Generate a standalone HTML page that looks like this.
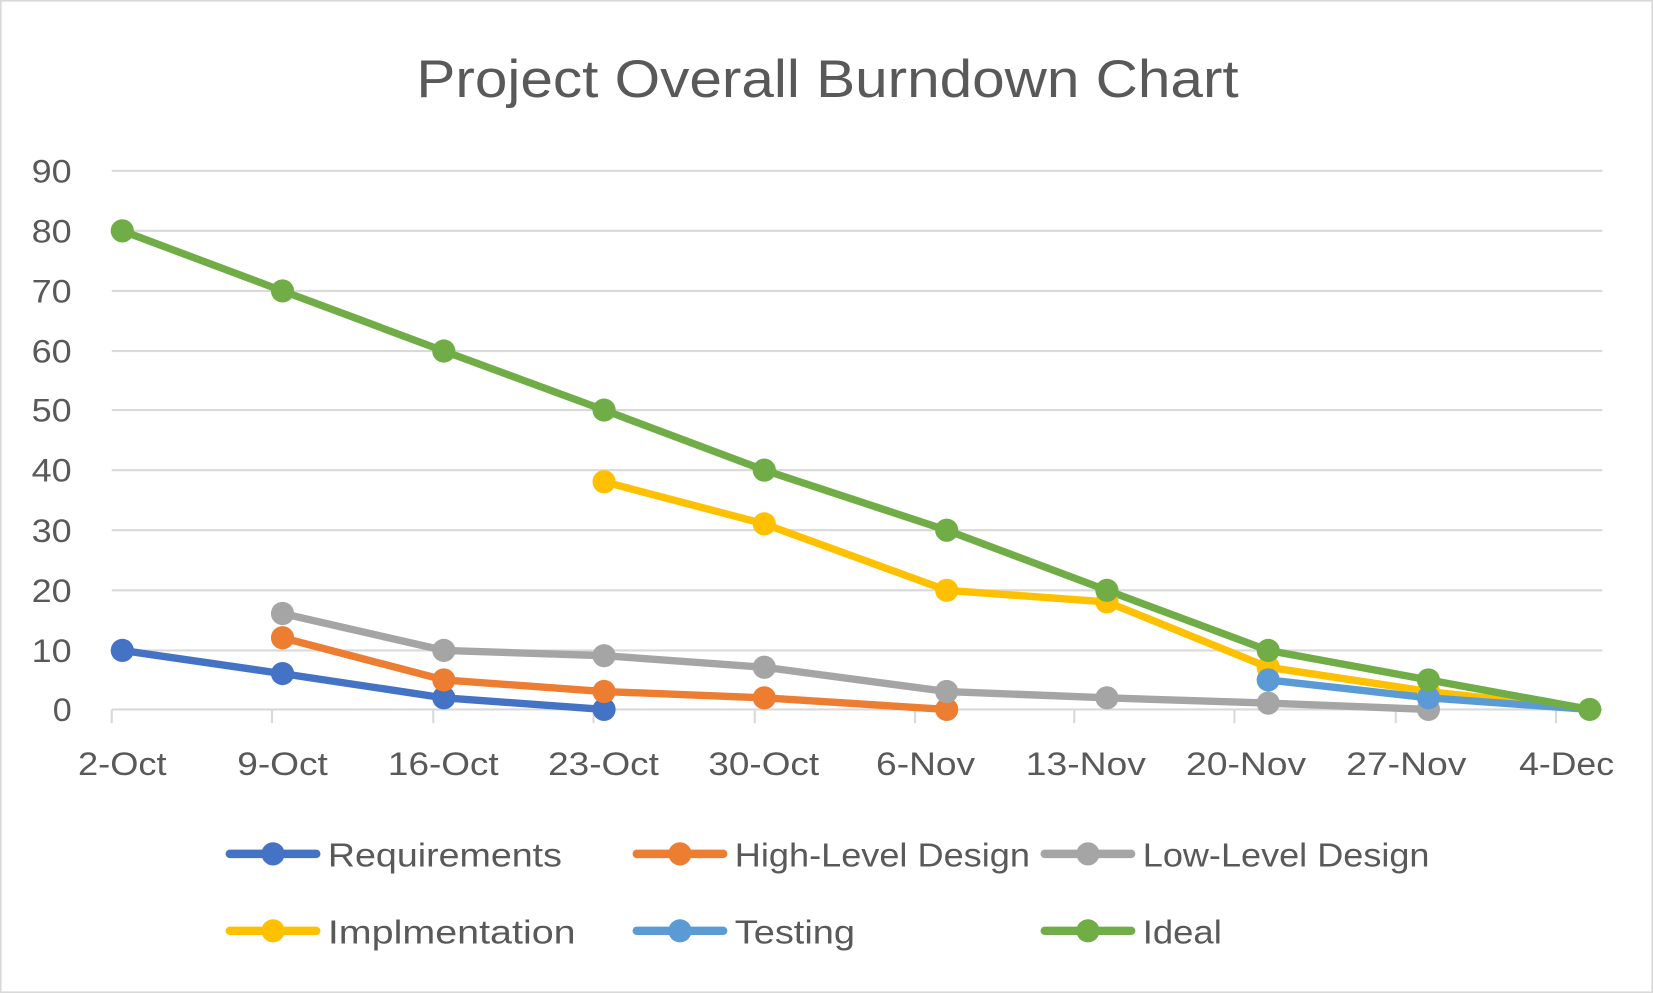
<!DOCTYPE html>
<html><head><meta charset="utf-8"><style>
html,body{margin:0;padding:0;background:#fff;}
svg{display:block;}
text{font-family:"Liberation Sans",sans-serif;fill:#595959;}
</style></head><body>
<svg width="1653" height="993" viewBox="0 0 1568 942" preserveAspectRatio="none">
<rect x="0.5" y="0.5" width="1567" height="941" fill="#fff" stroke="#d9d9d9" stroke-width="2"/>
<text x="785" y="92" font-size="50" text-anchor="middle" textLength="780" lengthAdjust="spacingAndGlyphs">Project Overall Burndown Chart</text>
<g stroke="#d9d9d9" stroke-width="2">
<line x1="106" x2="1520" y1="162" y2="162"/><line x1="106" x2="1520" y1="219" y2="219"/>
<line x1="106" x2="1520" y1="276" y2="276"/><line x1="106" x2="1520" y1="333" y2="333"/>
<line x1="106" x2="1520" y1="389" y2="389"/><line x1="106" x2="1520" y1="446" y2="446"/>
<line x1="106" x2="1520" y1="503" y2="503"/><line x1="106" x2="1520" y1="560" y2="560"/>
<line x1="106" x2="1520" y1="617" y2="617"/><line x1="106" x2="1520" y1="673" y2="673"/>
<line x1="106" x2="106" y1="673" y2="686"/><line x1="258" x2="258" y1="673" y2="686"/>
<line x1="411" x2="411" y1="673" y2="686"/><line x1="563" x2="563" y1="673" y2="686"/>
<line x1="716" x2="716" y1="673" y2="686"/><line x1="868" x2="868" y1="673" y2="686"/>
<line x1="1019" x2="1019" y1="673" y2="686"/><line x1="1171" x2="1171" y1="673" y2="686"/>
<line x1="1324" x2="1324" y1="673" y2="686"/><line x1="1476" x2="1476" y1="673" y2="686"/>
</g>
<g font-size="31" text-anchor="end">
<text x="68" y="173" textLength="38" lengthAdjust="spacingAndGlyphs">90</text><text x="68" y="230" textLength="38" lengthAdjust="spacingAndGlyphs">80</text><text x="68" y="287" textLength="38" lengthAdjust="spacingAndGlyphs">70</text>
<text x="68" y="344" textLength="38" lengthAdjust="spacingAndGlyphs">60</text><text x="68" y="400" textLength="38" lengthAdjust="spacingAndGlyphs">50</text><text x="68" y="457" textLength="38" lengthAdjust="spacingAndGlyphs">40</text>
<text x="68" y="514" textLength="38" lengthAdjust="spacingAndGlyphs">30</text><text x="68" y="571" textLength="38" lengthAdjust="spacingAndGlyphs">20</text><text x="68" y="628" textLength="38" lengthAdjust="spacingAndGlyphs">10</text>
<text x="68" y="684" textLength="18" lengthAdjust="spacingAndGlyphs">0</text>
</g>
<g font-size="31">
<text x="74" y="735" textLength="84" lengthAdjust="spacingAndGlyphs">2-Oct</text>
<text x="225" y="735" textLength="86" lengthAdjust="spacingAndGlyphs">9-Oct</text>
<text x="368" y="735" textLength="105" lengthAdjust="spacingAndGlyphs">16-Oct</text>
<text x="520" y="735" textLength="105" lengthAdjust="spacingAndGlyphs">23-Oct</text>
<text x="672" y="735" textLength="105" lengthAdjust="spacingAndGlyphs">30-Oct</text>
<text x="831" y="735" textLength="94" lengthAdjust="spacingAndGlyphs">6-Nov</text>
<text x="973" y="735" textLength="114" lengthAdjust="spacingAndGlyphs">13-Nov</text>
<text x="1125" y="735" textLength="114" lengthAdjust="spacingAndGlyphs">20-Nov</text>
<text x="1277" y="735" textLength="114" lengthAdjust="spacingAndGlyphs">27-Nov</text>
<text x="1441" y="735" textLength="90" lengthAdjust="spacingAndGlyphs">4-Dec</text>
</g>
<g fill="none" stroke-width="7" stroke-linejoin="round" stroke-linecap="round">
<polyline stroke="#4472c4" points="116,617 268,639 421,662 573,673"/>
<polyline stroke="#ed7d31" points="268,605 421,645 573,656 725,662 898,673"/>
<polyline stroke="#a5a5a5" points="268,582 421,617 573,622 725,633 898,656 1050,662 1203,667 1355,673"/>
<polyline stroke="#ffc000" points="573,457 725,497 898,560 1050,571 1203,633 1355,656 1508,673"/>
<polyline stroke="#5b9bd5" points="1203,645 1355,662 1508,673"/>
<polyline stroke="#70ad47" points="116,219 268,276 421,333 573,389 725,446 898,503 1050,560 1203,617 1355,645 1508,673"/>
</g>
<g fill="#4472c4"><circle cx="116" cy="617" r="11"/><circle cx="268" cy="639" r="11"/><circle cx="421" cy="662" r="11"/><circle cx="573" cy="673" r="11"/></g>
<g fill="#ed7d31"><circle cx="268" cy="605" r="11"/><circle cx="421" cy="645" r="11"/><circle cx="573" cy="656" r="11"/><circle cx="725" cy="662" r="11"/><circle cx="898" cy="673" r="11"/></g>
<g fill="#a5a5a5"><circle cx="268" cy="582" r="11"/><circle cx="421" cy="617" r="11"/><circle cx="573" cy="622" r="11"/><circle cx="725" cy="633" r="11"/><circle cx="898" cy="656" r="11"/><circle cx="1050" cy="662" r="11"/><circle cx="1203" cy="667" r="11"/><circle cx="1355" cy="673" r="11"/></g>
<g fill="#ffc000"><circle cx="573" cy="457" r="11"/><circle cx="725" cy="497" r="11"/><circle cx="898" cy="560" r="11"/><circle cx="1050" cy="571" r="11"/><circle cx="1203" cy="633" r="11"/><circle cx="1355" cy="656" r="11"/></g>
<g fill="#5b9bd5"><circle cx="1203" cy="645" r="11"/><circle cx="1355" cy="662" r="11"/></g>
<g fill="#70ad47"><circle cx="116" cy="219" r="11"/><circle cx="268" cy="276" r="11"/><circle cx="421" cy="333" r="11"/><circle cx="573" cy="389" r="11"/><circle cx="725" cy="446" r="11"/><circle cx="898" cy="503" r="11"/><circle cx="1050" cy="560" r="11"/><circle cx="1203" cy="617" r="11"/><circle cx="1355" cy="645" r="11"/><circle cx="1508" cy="673" r="11"/></g>
<g stroke-width="8" stroke-linecap="round">
<line x1="218" x2="300" y1="810" y2="810" stroke="#4472c4"/><circle cx="259" cy="810" r="11" fill="#4472c4"/>
<line x1="604" x2="686" y1="810" y2="810" stroke="#ed7d31"/><circle cx="645" cy="810" r="11" fill="#ed7d31"/>
<line x1="991" x2="1073" y1="810" y2="810" stroke="#a5a5a5"/><circle cx="1032" cy="810" r="11" fill="#a5a5a5"/>
<line x1="218" x2="300" y1="883" y2="883" stroke="#ffc000"/><circle cx="259" cy="883" r="11" fill="#ffc000"/>
<line x1="604" x2="686" y1="883" y2="883" stroke="#5b9bd5"/><circle cx="645" cy="883" r="11" fill="#5b9bd5"/>
<line x1="991" x2="1073" y1="883" y2="883" stroke="#70ad47"/><circle cx="1032" cy="883" r="11" fill="#70ad47"/>
</g>
<g font-size="32">
<text x="311" y="822" textLength="222" lengthAdjust="spacingAndGlyphs">Requirements</text>
<text x="697" y="822" textLength="280" lengthAdjust="spacingAndGlyphs">High-Level Design</text>
<text x="1084" y="822" textLength="272" lengthAdjust="spacingAndGlyphs">Low-Level Design</text>
<text x="311" y="895" textLength="235" lengthAdjust="spacingAndGlyphs">Implmentation</text>
<text x="697" y="895" textLength="114" lengthAdjust="spacingAndGlyphs">Testing</text>
<text x="1084" y="895" textLength="75" lengthAdjust="spacingAndGlyphs">Ideal</text>
</g>
</svg>
</body></html>
